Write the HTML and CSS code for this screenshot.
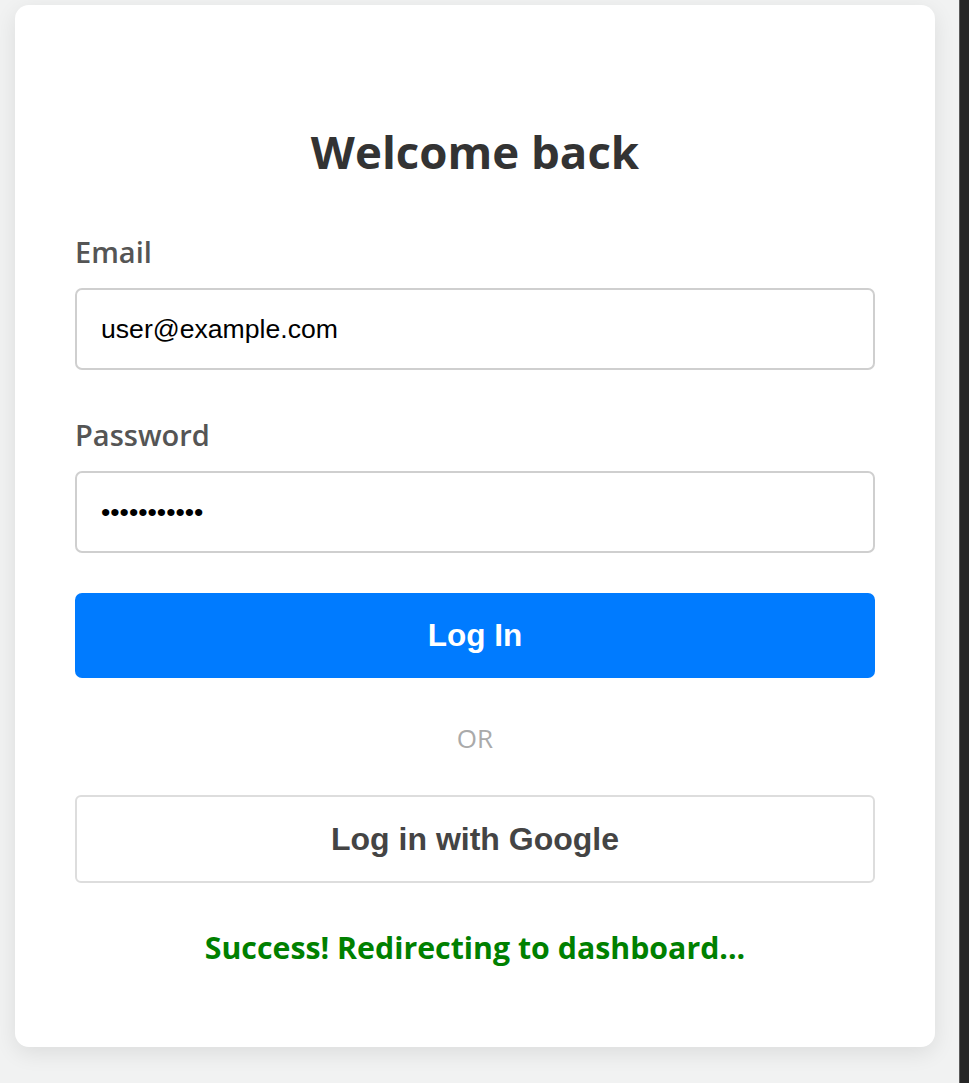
FILE: index.html
```html
<!DOCTYPE html>
<html lang="en">
<head>
<meta charset="utf-8">
<title>Welcome back</title>
<link rel="stylesheet" href="styles.css">
</head>
<body>
<div class="page">
  <main class="stage">
    <form class="card">
      <h1 class="title">Welcome back</h1>
      <label class="label" for="email">Email</label>
      <input class="field" id="email" type="email" value="user@example.com">
      <label class="label label-pw" for="pw">Password</label>
      <input class="field" id="pw" type="password" value="password123">
      <button class="btn-primary" type="button">Log In</button>
      <div class="divider">OR</div>
      <button class="btn-google" type="button">Log in with Google</button>
      <p class="success">Success! Redirecting to dashboard...</p>
    </form>
  </main>
  <div class="edge"></div>
</div>
</body>
</html>
```
FILE: styles.css
```css
html, body {
  margin: 0;
  padding: 0;
  height: 100%;
}
body {
  background: #f1f2f2;
  font-family: "Open Sans", "Noto Sans", sans-serif;
  overflow: hidden;
}
.page {
  display: flex;
  height: 100%;
}
.stage {
  flex: 1;
  padding: 5px 0 0 15px;
}
.edge {
  width: 9px;
  background: #262626;
  border-left: 1px solid #5a5a5a;
}
.card {
  width: 920px;
  box-sizing: border-box;
  background: #fff;
  border-radius: 14px;
  box-shadow: 0 6px 22px rgba(0, 0, 0, 0.09);
  padding: 116px 60px 79px;
  display: flex;
  flex-direction: column;
}
.title {
  margin: 0 0 51px;
  font-size: 45.6px;
  line-height: 60px;
  font-weight: 700;
  color: #333;
  text-align: center;
}
.label {
  display: block;
  font-size: 29px;
  line-height: 40px;
  font-weight: 600;
  color: #555;
  margin-bottom: 16px;
}
.label-pw {
  margin-top: 45px;
  margin-bottom: 16px;
}
.field {
  box-sizing: border-box;
  width: 100%;
  height: 82px;
  border: 2px solid #cfcfcf;
  border-radius: 7px;
  padding: 0 24px;
  font-family: "Liberation Sans", Arial, sans-serif;
  font-size: 26.6px;
  color: #000;
  background: #fff;
  outline: none;
}
.btn-primary {
  margin-top: 40px;
  height: 85px;
  border: none;
  border-radius: 7px;
  background: #007bff;
  color: #fff;
  font-family: "Liberation Sans", Arial, sans-serif;
  font-weight: 700;
  font-size: 31.5px;
}
.divider {
  margin-top: 40px;
  text-align: center;
  color: #aaa;
  font-size: 26px;
  line-height: 40px;
}
.btn-google {
  margin-top: 37px;
  height: 88px;
  border: 2px solid #ddd;
  border-radius: 6px;
  background: #fff;
  color: #444;
  font-family: "Liberation Sans", Arial, sans-serif;
  font-weight: 700;
  font-size: 32px;
}
.success {
  margin: 45px 0 0;
  text-align: center;
  color: #008000;
  font-weight: 700;
  font-size: 30.3px;
  line-height: 40px;
}
```
